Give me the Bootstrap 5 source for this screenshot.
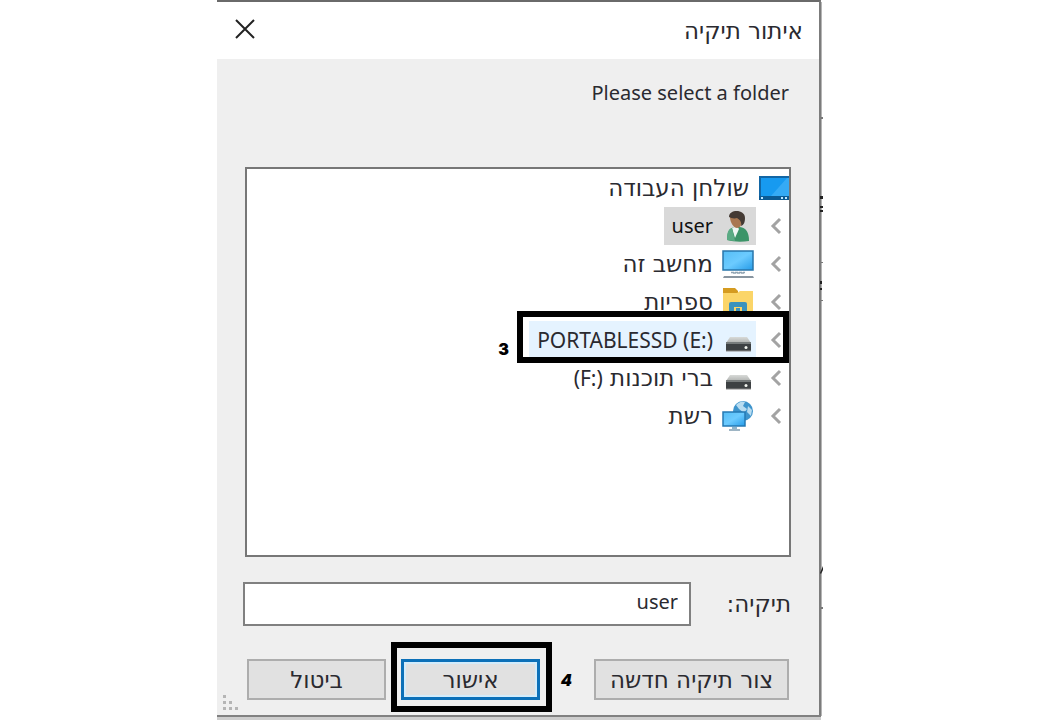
<!DOCTYPE html>
<html lang="he">
<head>
<meta charset="utf-8">
<meta name="viewport" content="width=device-width, initial-scale=1">
<title>איתור תיקיה</title>
<link href="https://cdn.jsdelivr.net/npm/bootstrap@5.3.0/dist/css/bootstrap.min.css" rel="stylesheet">
<style>
body { font-family: "DejaVu Sans", "Open Sans", sans-serif; font-size: 23px; line-height: 28px; color: #2a2a30; background: #fff; }
.stage { padding-right: 2px; }
.dialog { max-width: 604px; background: #efefef; border-top: 2px solid #6a6a6a; border-right: 2px solid #7c7c7c; }
.titlebar { height: 57px; padding: 0 16px 0 18px; }
.close-btn { line-height: 0; }
.latin { font-family: "Noto Sans", sans-serif; font-size: 20px; }
.latin-lg { font-size: 21px; }
.prompt-text { padding: 20px 30px 0 28px; height: 108px; }
.tree { margin: 0 28px; min-height: 390px; border: 2px solid #777; background: #fff; }
.tree-row { height: 38px; }
.tree-row.root { gap: 10px; }
.twisty { width: 33px; padding: 0 7px 0 0; line-height: 0; }
.node { height: 38px; padding: 0 2px 0 8px; gap: 9px; color: inherit; text-decoration: none; }
.node.selected { background: #d9d9d9; color: #111; }
.node.hovered { background: #e5f3ff; }
.node svg, .root svg { flex: none; }
.callout { position: absolute; border: 6px solid #000; pointer-events: none; }
.callout-row { inset: -10px 0 -4px auto; width: 272px; }
.callout-btn { inset: -17px -12px -12px -10px; }
.step { position: absolute; font-family: Inter, sans-serif; font-weight: 900; font-size: 16px; line-height: 16px; color: #000; }
.step-row { right: 280px; top: 20px; }
.step-btn { right: -32px; top: 13px; font-style: italic; }
.folder-row { margin: 25px 28px 0 26px; }
.folder-input { width: 448px; height: 44px; border: 2px solid #808080; border-radius: 0; padding: 0 11px 6px; color: inherit; background: #fff; }
.actions { margin: 33px 30px 0; padding-bottom: 15px; }
.win-btn { height: 41px; width: 139px; border: 2px solid #adadad; border-radius: 0; background: #e1e1e1; color: inherit; padding: 0; font-size: 23px; line-height: 28px; }
.win-btn.wide { width: 195px; }
.win-btn.primary { border: 3px solid #0c70b8; box-shadow: inset 0 0 0 2px #d3ecfb; }
.ok-group { margin-right: 54px; }
.grip { position: absolute; left: 5px; bottom: 3px; }
.edge { position: absolute; left: 100%; top: 0; }
.under { height: 6px; max-width: 604px; background: #cdcdcd; border-top: 2px solid #808080; }
</style>
</head>
<body>
<svg width="0" height="0" class="position-absolute" aria-hidden="true">
  <defs>
    <linearGradient id="blue" x1="0" y1="0" x2="1" y2="1"><stop offset="0" stop-color="#55bdf5"/><stop offset=".5" stop-color="#6ccbff"/><stop offset="1" stop-color="#259be8"/></linearGradient>
    <linearGradient id="metal" x1="0" y1="0" x2="0" y2="1"><stop offset="0" stop-color="#d8dad8"/><stop offset="1" stop-color="#b0b2b0"/></linearGradient>
    <symbol id="chev" viewBox="0 0 12 18"><path d="M10 2 3 9l7 7" fill="none" stroke="#a3a3a3" stroke-width="3"/></symbol>
    <symbol id="drive" viewBox="0 0 32 32"><path d="M8 13h17l4 6H4z" fill="url(#metal)"/><path d="M4 18h25v9H4z" fill="#3d4143"/><path d="M4 18h25v2H4z" fill="#777c7c"/><path d="M4 27h25" stroke="#888" stroke-width="1"/><circle cx="24" cy="23.500" r="1.500" fill="#f2f5ef"/></symbol>
  </defs>
</svg>
<main class="stage">
<div class="dialog mx-auto position-relative" dir="rtl">
  <header class="titlebar bg-white d-flex align-items-center justify-content-between">
    <span>איתור תיקיה</span>
    <button type="button" class="btn p-0 pb-1 border-0 close-btn" aria-label="סגור"><svg width="20" height="20" viewBox="0 0 20 20"><path d="M1 1l18 18M19 1 1 19" stroke="#222" stroke-width="2"/></svg></button>
  </header>
  <p class="prompt-text mb-0 latin text-end" dir="ltr">Please select a folder</p>
  <ul class="tree list-unstyled mb-0 p-0">
    <li class="tree-row root d-flex align-items-center">
      <svg width="30" height="24" viewBox="0 0 30 24"><path d="M0 0h30v24H0z" fill="#1266a5"/><path d="M2 2h28v18H2z" fill="#179af0"/><path d="M12 20 28 2h2v18z" fill="#35aaf5"/><path d="M0 20h30v4H0z" fill="#0b5a94"/><path d="M2 21h2v2H2zM22 21h2v2h-2zM26 21h2v2h-2z" fill="#bfe6ff"/></svg>
      <span>שולחן העבודה</span>
    </li>
    <li class="tree-row d-flex align-items-center">
      <span class="twisty"><svg width="12" height="18"><use href="#chev"/></svg></span>
      <a href="#" class="node selected d-flex align-items-center">
        <svg width="32" height="32" viewBox="0 0 32 32"><path d="M5 30c0-8 2-12 8-13h5c6 1 9 5 9 14-7 1-15 1-22-1z" fill="#3c9468"/><path d="M10 18l3 10 4-9-2-3z" fill="#eef6f3"/><path d="M5 30c0-7 1-11 5-12l3 13z" fill="#5bab84"/><path d="M8 7c0-6 13-6 13 1 0 6-3 10-6 10S8 13 8 7z" fill="#a97852"/><path d="M7 7C7-1 23-1 23 8c0 4-1 7-4 8 1-4-1-6-4-8-3 1-6 0-8-1z" fill="#443a34"/></svg>
        <span class="latin">user</span></a>
    </li>
    <li class="tree-row d-flex align-items-center">
      <span class="twisty"><svg width="12" height="18"><use href="#chev"/></svg></span>
      <a href="#" class="node d-flex align-items-center">
        <svg width="32" height="32" viewBox="0 0 32 32"><path d="M1 3h30v19H1z" fill="url(#blue)" stroke="#2876ab" stroke-width="1.500"/><path d="M11 25h11M9 24.500h14" stroke="#91a4b2" stroke-width="1.500" stroke-dasharray="3 1"/><path d="M2 28h29l1 2H1z" fill="#8995a0"/></svg>
        <span>מחשב זה</span></a>
    </li>
    <li class="tree-row d-flex align-items-center">
      <span class="twisty"><svg width="12" height="18"><use href="#chev"/></svg></span>
      <a href="#" class="node d-flex align-items-center">
        <svg width="32" height="32" viewBox="0 0 32 32"><path d="M1 2h12l3 3v5H1z" fill="#d59b20"/><path d="M1 7h14l3-2h13v26H1z" fill="#fbd568"/><path d="M7 31V18q0-2 2-2h14q2 0 2 2v13z" fill="#3b93bd"/><path d="M12 21h8v7h-8z" fill="#fbd568"/><path d="M14 22h4v3h-4z" fill="#3b93bd"/></svg>
        <span>ספריות</span></a>
    </li>
    <li class="tree-row d-flex align-items-center position-relative">
      <span class="twisty"><svg width="12" height="18"><use href="#chev"/></svg></span>
      <a href="#" class="node hovered d-flex align-items-center">
        <svg width="32" height="32"><use href="#drive"/></svg>
        <span class="latin latin-lg" dir="ltr">PORTABLESSD (E:)</span></a>
      <span class="callout callout-row"></span><span class="step step-row">3</span>
    </li>
    <li class="tree-row d-flex align-items-center">
      <span class="twisty"><svg width="12" height="18"><use href="#chev"/></svg></span>
      <a href="#" class="node d-flex align-items-center">
        <svg width="32" height="32"><use href="#drive"/></svg>
        <span>ברי תוכנות <bdi class="latin latin-lg" dir="ltr">(F:)</bdi></span></a>
    </li>
    <li class="tree-row d-flex align-items-center">
      <span class="twisty"><svg width="12" height="18"><use href="#chev"/></svg></span>
      <a href="#" class="node d-flex align-items-center">
        <svg width="32" height="32" viewBox="0 0 32 32"><circle cx="21" cy="11" r="10" fill="#3e94cc"/><path d="M14 5q5-5 9-3l-2 4 4 3-3 4-5-4zM26 6l4 4-1 6-4-4z" fill="#b8dcf0"/><path d="M1 12h22v14H1z" fill="url(#blue)" stroke="#2579b4" stroke-width="1.500"/><path d="M10 27h5v2h-5z" fill="#8db4cc"/><path d="M7 30h11" stroke="#7e9cb0" stroke-width="1.500"/></svg>
        <span>רשת</span></a>
    </li>
  </ul>
  <div class="folder-row d-flex align-items-center justify-content-between">
    <label for="folder">תיקיה:</label>
    <input id="folder" type="text" class="folder-input latin" value="user">
  </div>
  <footer class="position-relative">
    <div class="actions d-flex align-items-center">
      <button type="button" class="btn win-btn wide">צור תיקיה חדשה</button>
      <div class="position-relative ok-group">
        <button type="button" class="btn win-btn primary d-block">אישור</button>
        <span class="callout callout-btn"></span><span class="step step-btn">4</span>
      </div>
      <button type="button" class="btn win-btn me-auto">ביטול</button>
    </div>
    <svg class="grip" width="18" height="18" viewBox="0 0 18 18" fill="#b5b5b5"><path d="M1 1h3v3H1zM1 7h3v3H1zM7 7h3v3H7zM1 13h3v3H1zM7 13h3v3H7zM13 13h3v3h-3z"/></svg>
  </footer>
  <svg class="edge" width="4" height="714" viewBox="0 0 4 714" aria-hidden="true"><path d="M2 0h1v714H2z" fill="#b5b5b5"/><path d="M2 115h2v2H2zM2 260h2v1H2zM2 298h2v1H2zM2 605h2v2H2z" fill="#777"/><path d="M1 194h3v3H1zM1 204h3v2H1zM1 208h3v2H1zM1 279h2v3H1zM1 286h2v2H1zM1 571l3-7v4l-2 4z" fill="#222"/></svg>
</div>
<div class="under mx-auto"></div>
</main>
<script src="https://cdn.jsdelivr.net/npm/bootstrap@5.3.0/dist/js/bootstrap.bundle.min.js"></script>
</body>
</html>
